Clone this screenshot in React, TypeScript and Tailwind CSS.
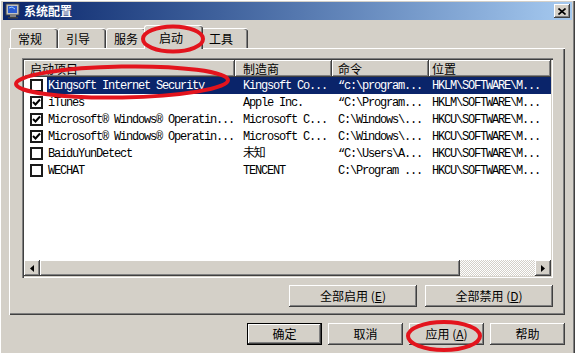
import { ReactNode } from "react";

const cjk = "font-['Noto_Sans_CJK_SC',sans-serif] text-[12px]";
const mono =
  "font-['Liberation_Mono','Noto_Sans_CJK_SC',monospace] text-[12px] tracking-[-1.2px]";
const raised =
  "shadow-[inset_-1px_-1px_#404040,inset_1px_1px_#ffffff,inset_-2px_-2px_#808080]";

type Row = {
  checked: boolean;
  name: string;
  maker: string;
  cmd: string;
  loc: string;
  selected?: boolean;
};

const rows: Row[] = [
  {
    checked: false,
    name: "Kingsoft Internet Security",
    maker: "Kingsoft Co...",
    cmd: "“c:\\program...",
    loc: "HKLM\\SOFTWARE\\M...",
    selected: true,
  },
  {
    checked: true,
    name: "iTunes",
    maker: "Apple Inc.",
    cmd: "“C:\\Program...",
    loc: "HKLM\\SOFTWARE\\M...",
  },
  {
    checked: true,
    name: "Microsoft® Windows® Operatin...",
    maker: "Microsoft C...",
    cmd: "C:\\Windows\\...",
    loc: "HKCU\\SOFTWARE\\M...",
  },
  {
    checked: true,
    name: "Microsoft® Windows® Operatin...",
    maker: "Microsoft C...",
    cmd: "C:\\Windows\\...",
    loc: "HKCU\\SOFTWARE\\M...",
  },
  {
    checked: false,
    name: "BaiduYunDetect",
    maker: "未知",
    cmd: "“C:\\Users\\A...",
    loc: "HKCU\\SOFTWARE\\M...",
  },
  {
    checked: false,
    name: "WECHAT",
    maker: "TENCENT",
    cmd: "C:\\Program ...",
    loc: "HKCU\\SOFTWARE\\M...",
  },
];

function Checkbox({ checked }: { checked: boolean }) {
  return (
    <div className="w-[13px] h-[13px] border-2 border-[#1a1a1a] bg-white flex items-center justify-center">
      {checked && (
        <svg width="9" height="9" viewBox="0 0 9 9">
          <path d="M1 4 L3.5 6.5 L8 1.5" stroke="#000" strokeWidth="2" fill="none" />
        </svg>
      )}
    </div>
  );
}

function Button({
  children,
  width,
  isDefault,
}: {
  children: ReactNode;
  width: string;
  isDefault?: boolean;
}) {
  return (
    <div
      className={`${width} h-[22px] flex items-center justify-center bg-[#d4d0c8] text-black ${cjk} ${
        isDefault ? "border border-black" : ""
      }`}
    >
      <div className={`w-full h-full flex items-center justify-center ${raised}`}>
        {children}
      </div>
    </div>
  );
}

function Tab({ label, selected }: { label: string; selected?: boolean }) {
  if (selected) {
    return (
      <div
        className={`relative z-10 -mx-[2px] -mb-[1px] w-[59px] h-[24px] bg-[#d4d0c8] rounded-t-[3px] border-t border-l border-white shadow-[inset_-1px_0_#404040,inset_-2px_0_#808080] flex items-start pt-[3px] pl-[14px] ${cjk} text-black`}
      >
        {label}
      </div>
    );
  }
  return (
    <div
      className={`h-[20px] bg-[#d4d0c8] rounded-t-[3px] border-t border-l border-white shadow-[inset_-1px_0_#404040,inset_-2px_0_#808080] flex items-start pt-[1px] pl-[7px] ${cjk} text-black`}
    >
      {label}
    </div>
  );
}

function HeaderCell({ label, width, pad }: { label: string; width: string; pad: string }) {
  return (
    <div className={`${width} h-[17px] ${pad} flex items-center ${raised} ${cjk} text-black`}>
      {label}
    </div>
  );
}

function ListRow({ row }: { row: Row }) {
  const text = row.selected ? "text-white bg-[#0a246a]" : "text-black";
  return (
    <div className="flex h-[17px] items-center">
      <div className="w-[23px] h-full flex items-center pl-[6px]">
        <Checkbox checked={row.checked} />
      </div>
      <div className={`flex flex-1 h-full items-center ${text} ${mono}`}>
        <div className="w-[188px] pl-[1px] whitespace-pre overflow-hidden">{row.name}</div>
        <div className="w-[97px] pl-[8px] whitespace-pre overflow-hidden">{row.maker}</div>
        <div className="w-[97px] pl-[6px] whitespace-pre overflow-hidden">{row.cmd}</div>
        <div className="flex-1 pl-[3px] whitespace-pre overflow-hidden">{row.loc}</div>
      </div>
    </div>
  );
}

function Arrow({ dir }: { dir: "left" | "right" }) {
  return (
    <div className={`w-[16px] h-[16px] bg-[#d4d0c8] flex items-center justify-center ${raised}`}>
      <svg width="4" height="7" viewBox="0 0 4 7">
        {dir === "left" ? (
          <path d="M4 0 L0 3.5 L4 7 Z" fill="#000" />
        ) : (
          <path d="M0 0 L4 3.5 L0 7 Z" fill="#000" />
        )}
      </svg>
    </div>
  );
}

function App() {
  return (
    <div className="relative w-[575px] h-[353px] overflow-hidden bg-[#d4d0c8] pt-[2px] px-[3px] shadow-[inset_1px_1px_#ffffff,inset_-1px_0_#404040,inset_-2px_0_#808080]">
      {/* title bar */}
      <div className="h-[18px] flex items-center bg-gradient-to-r from-[#0a246a] to-[#a6caf0] pl-[2px] pr-[2px]">
        <svg width="16" height="16" viewBox="0 0 16 16">
          <rect x="1" y="1" width="13" height="11" fill="#c0c0c0" stroke="#404040" />
          <rect x="3" y="3" width="9" height="7" fill="#2a5bd0" />
          <path d="M4 5 L7 4 L10 6" stroke="#9fd0ff" fill="none" />
          <rect x="5" y="12" width="6" height="2" fill="#808080" />
          <rect x="3" y="14" width="10" height="1.5" fill="#404040" />
        </svg>
        <span className={`ml-[3px] font-bold text-white ${cjk}`}>系统配置</span>
        <div className="flex-1" />
        <div className={`w-[16px] h-[14px] bg-[#d4d0c8] flex items-center justify-center ${raised}`}>
          <svg width="8" height="7" viewBox="0 0 8 7">
            <path d="M0.5 0.5 L7.5 6.5 M7.5 0.5 L0.5 6.5" stroke="#000" strokeWidth="1.6" />
          </svg>
        </div>
      </div>

      {/* tabs */}
      <div className="mt-[5px] h-[23px] flex items-end pl-[7px]">
        <div className="w-[48px]">
          <Tab label="常规" />
        </div>
        <div className="w-[48px]">
          <Tab label="引导" />
        </div>
        <div className="w-[40px]">
          <Tab label="服务" />
        </div>
        <Tab label="启动" selected />
        <div className="w-[47px]">
          <Tab label="工具" />
        </div>
      </div>

      {/* tab panel */}
      <div className="ml-[6px] w-[556px] h-[267px] bg-[#d4d0c8] shadow-[inset_1px_1px_#ffffff,inset_-1px_-1px_#404040,inset_-2px_-2px_#808080] pt-[10px] pl-[13px]">
        <div className="w-[531px] h-[220px] bg-white p-[2px] shadow-[inset_1px_1px_#808080,inset_2px_2px_#404040,inset_-1px_-1px_#ffffff,inset_-2px_-2px_#d4d0c8]">
          <div className="h-full flex flex-col">
            <div className="flex bg-[#d4d0c8]">
              <HeaderCell label="启动项目" width="w-[211px]" pad="pl-[6px]" />
              <HeaderCell label="制造商" width="w-[97px]" pad="pl-[8px]" />
              <HeaderCell label="命令" width="w-[97px]" pad="pl-[6px]" />
              <HeaderCell label="位置" width="flex-1" pad="pl-[3px]" />
            </div>
            {rows.map((r, i) => (
              <ListRow key={i} row={r} />
            ))}
            <div className="flex-1" />
            <div className="h-[16px] flex bg-[#d4d0c8]">
              <Arrow dir="left" />
              <div className={`w-[420px] h-[16px] bg-[#d4d0c8] ${raised}`} />
              <div className="flex-1 h-[16px] bg-[repeating-conic-gradient(#d4d0c8_0%_25%,#ffffff_0%_50%)] bg-[length:2px_2px]" />
              <Arrow dir="right" />
            </div>
          </div>
        </div>
        <div className="mt-[7px] w-[531px] flex justify-end gap-[8px]">
          <Button width="w-[128px]">
            全部启用 (<u>E</u>)
          </Button>
          <Button width="w-[128px]">
            全部禁用 (<u>D</u>)
          </Button>
        </div>
      </div>

      {/* bottom buttons */}
      <div className="mt-[8px] flex justify-end gap-[6px] pr-[7px]">
        <Button width="w-[75px]" isDefault>
          确定
        </Button>
        <Button width="w-[75px]">取消</Button>
        <Button width="w-[75px]">
          应用 (<u>A</u>)
        </Button>
        <Button width="w-[75px]">帮助</Button>
      </div>

      {/* red annotation marks */}
      <svg
        className="absolute left-0 top-0 z-20 pointer-events-none"
        width="575"
        height="353"
        viewBox="0 0 575 353"
      >
        <g stroke="#e3141d" strokeWidth="4" fill="none">
          <ellipse cx="173" cy="39" rx="30" ry="12.5" />
          <ellipse cx="122" cy="82" rx="106" ry="15.5" transform="rotate(-1 122 82)" />
          <ellipse cx="444" cy="336" rx="36" ry="14" />
        </g>
      </svg>
    </div>
  );
}

export default App;
